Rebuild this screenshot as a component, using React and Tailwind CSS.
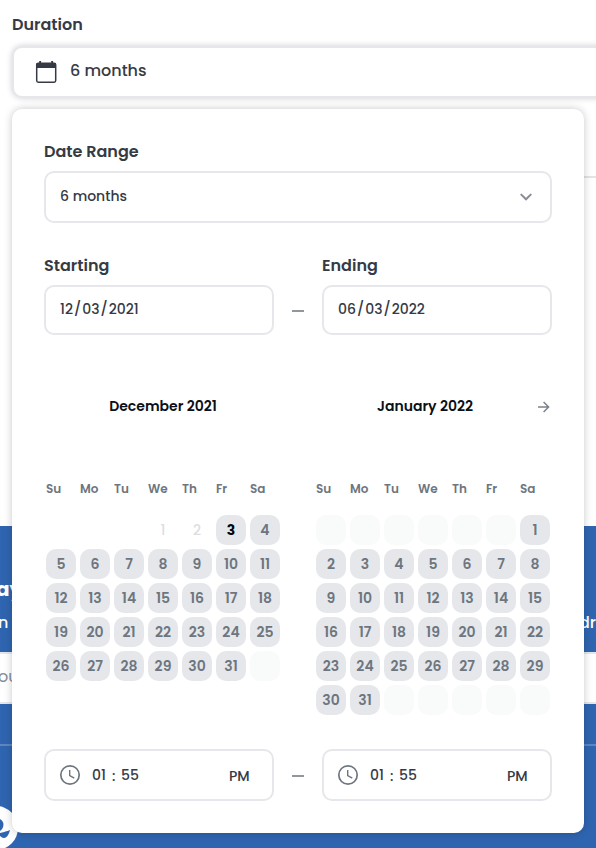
import React from "react";

const WEEKDAYS = ["Su", "Mo", "Tu", "We", "Th", "Fr", "Sa"];

const range = (from, to) => Array.from({ length: to - from + 1 }, (_, i) => from + i);

function CalendarIcon() {
  return (
    <svg width="24" height="24" viewBox="0 0 24 24" fill="none" aria-hidden="true">
      <rect x="2.700" y="3.200" width="19" height="19" rx="1.600" stroke="currentColor" strokeWidth="1.500" />
      <path d="M2.500 3.200h19.400V8H2.500zM5.200 1h1.900v3H5.200zM17.200 1h1.900v3h-1.900z" fill="currentColor" />
    </svg>
  );
}

function ClockIcon() {
  return (
    <svg
      width="24"
      height="24"
      viewBox="0 0 24 24"
      fill="none"
      stroke="currentColor"
      className="shrink-0 text-[#6d767f]"
      aria-hidden="true"
    >
      <circle cx="12" cy="12" r="9.200" strokeWidth="1.700" />
      <path d="M11.700 7v5.500l4.600 2.700" strokeWidth="1.400" />
    </svg>
  );
}

function Day({ day, state }) {
  const base = "size-[30px] rounded-[10px] text-sm leading-5 text-center";
  if (state === "hidden") return <span className="size-[30px]" />;
  if (state === "blank") return <span className={`${base} bg-[#f9fafa]`} />;
  if (state === "past")
    return (
      <button type="button" disabled className={`${base} font-medium text-[#dcdee1]`}>
        {day}
      </button>
    );
  if (state === "start")
    return (
      <button type="button" className={`${base} bg-[#e5e7eb] font-bold text-[#05080f]`}>
        {day}
      </button>
    );
  return (
    <button type="button" className={`${base} bg-[#e5e7eb] font-semibold text-[#6d767f]`}>
      {day}
    </button>
  );
}

function Month({ title, days, next }) {
  return (
    <section className="w-[234px]" aria-label={title}>
      <div className="flex h-6 items-center">
        <h2 className="flex-1 text-center text-sm font-semibold text-[#0b1018]">{title}</h2>
        {next && (
          <button type="button" aria-label="Next month" className="flex w-4 justify-end text-[#7c8289]">
            <svg width="14" height="14" viewBox="0 0 14 14" fill="none" stroke="currentColor" strokeWidth="1.500">
              <path d="M2 8h10.500M7.600 3l5 5-5 5" />
            </svg>
          </button>
        )}
      </div>
      <div className="mt-[63px] grid grid-cols-7 gap-1 text-xs leading-4 font-semibold text-[#6d767f]">
        {WEEKDAYS.map((d) => (
          <span key={d}>{d}</span>
        ))}
      </div>
      <div className="mt-[18px] grid grid-cols-7 gap-1">
        {days.map((d, i) => (
          <Day key={i} {...d} />
        ))}
      </div>
    </section>
  );
}

const december = [
  ...range(1, 3).map(() => ({ state: "hidden" })),
  { day: 1, state: "past" },
  { day: 2, state: "past" },
  { day: 3, state: "start" },
  ...range(4, 31).map((day) => ({ day })),
  { state: "blank" },
];

const january = [
  ...range(1, 6).map(() => ({ state: "blank" })),
  ...range(1, 31).map((day) => ({ day })),
  ...range(1, 5).map(() => ({ state: "blank" })),
];

function Dash() {
  return (
    <span className="flex w-12 shrink-0 justify-center pt-[2px]">
      <span className="h-[2px] w-3 bg-[#92979d]" />
    </span>
  );
}

function DateField({ id, label, value }) {
  return (
    <div className="min-w-0 flex-1">
      <label htmlFor={id} className="block text-base font-semibold">
        {label}
      </label>
      <input
        id={id}
        type="date"
        defaultValue={value}
        className="mt-[7px] block h-[50px] w-full rounded-[10px] border-2 border-[#e5e7eb] bg-white px-[13px] pb-[2px] text-sm font-medium [&::-webkit-calendar-picker-indicator]:hidden"
      />
    </div>
  );
}

function TimeField({ name }) {
  return (
    <div className="flex h-[52px] min-w-0 flex-1 items-center rounded-[10px] border-2 border-[#e5e7eb] pr-[22px] pl-3 text-sm font-medium">
      <ClockIcon />
      <input aria-label={`${name} hour`} defaultValue="01" className="ml-[10px] w-[19px]" />
      <span className="w-[10px] pt-px pl-px">:</span>
      <input aria-label={`${name} minute`} defaultValue="55" className="w-5" />
      <select aria-label={`${name} period`} defaultValue="PM" className="ml-auto appearance-none pt-[2px]">
        <option>PM</option>
      </select>
    </div>
  );
}

function DurationPanel() {
  return (
    <div className="absolute inset-x-3 top-[109px] z-10 rounded-[10px] bg-white px-8 pt-[31px] pb-8 shadow-[0_0_8px_rgba(0,0,0,0.22)]">
      <label htmlFor="range" className="block text-base font-semibold">
        Date Range
      </label>
      <div className="mt-[7px] grid items-center">
        <select
          id="range"
          defaultValue="6 months"
          className="col-start-1 row-start-1 h-[52px] appearance-none rounded-[10px] border-2 border-[#e5e7eb] bg-white px-[14px] pb-[2px] text-sm font-medium"
        >
          <option>6 months</option>
        </select>
        <svg
          className="pointer-events-none col-start-1 row-start-1 mr-5 justify-self-end text-[#888c95]"
          width="12"
          height="8"
          viewBox="0 0 12 8"
          fill="none"
          stroke="currentColor"
          strokeWidth="2"
          strokeLinecap="round"
        >
          <path d="M1.300 1.600 6 6.300l4.700-4.700" />
        </svg>
      </div>

      <div className="mt-[31px] flex">
        <DateField id="starting" label="Starting" value="2021-12-03" />
        <div className="flex h-[50px] items-center self-end">
          <Dash />
        </div>
        <DateField id="ending" label="Ending" value="2022-06-03" />
      </div>

      <div className="mt-[59px] flex justify-between px-[2px]">
        <Month title="December 2021" days={december} />
        <Month title="January 2022" days={january} next />
      </div>

      <div className="mt-[34px] flex items-center">
        <TimeField name="Starting" />
        <Dash />
        <TimeField name="Ending" />
      </div>
    </div>
  );
}

export default function App() {
  return (
    <div className="relative flex min-h-screen flex-col overflow-hidden bg-white font-[Poppins,Inter,sans-serif] text-[#363a45]">
      <div className="h-[526px] shrink-0 pt-[13px] pl-3">
        <span id="duration" className="block text-base font-semibold">
          Duration
        </span>
        <button
          type="button"
          aria-labelledby="duration"
          className="mt-[9px] -mr-3 flex h-[52px] w-[calc(100%+12px)] items-center gap-3 rounded-[10px] border-2 border-[#e5e7eb] bg-white pl-5 text-base font-medium shadow-[0_0_6px_rgba(0,0,0,0.2)]"
        >
          <CalendarIcon />
          <span className="pb-[2px]">6 months</span>
        </button>
        <hr className="mt-[78px] border-t-2 border-[#e2e4e8]" />
      </div>
      <DurationPanel />

      <footer className="flex-1 bg-[#2f65b0] pt-[47px] text-white">
        <h3 className="-ml-1 text-xl leading-8 font-bold">ay</h3>
        <p className="flex h-8 items-center justify-between pt-1 text-base font-medium">
          <span className="-ml-[2px]">n</span>
          <span>dr</span>
        </p>
        <input
          aria-label="Email"
          placeholder="ou"
          className="mt-[15px] -ml-1 block h-[52px] w-[calc(100%+8px)] border-2 border-[#e5e7eb] bg-white pb-1 text-base placeholder:text-[#888e96]"
        />
        <hr className="mt-10 border-t-2 border-[#5f86bf]" />
        <svg className="mt-[60px] block" width="20" height="42" viewBox="0 0 20 42">
          <circle cx="-4" cy="22" r="22" fill="#fff" />
          <path d="M0 13c3 2 4 4 3.300 7-.6 3-2 4-3.300 5zM0 27c3-1 5-1 10-3-1 4-3 8-6 8-1.600 0-2.500-1-4-2z" fill="#2f65b0" />
        </svg>
      </footer>
    </div>
  );
}
